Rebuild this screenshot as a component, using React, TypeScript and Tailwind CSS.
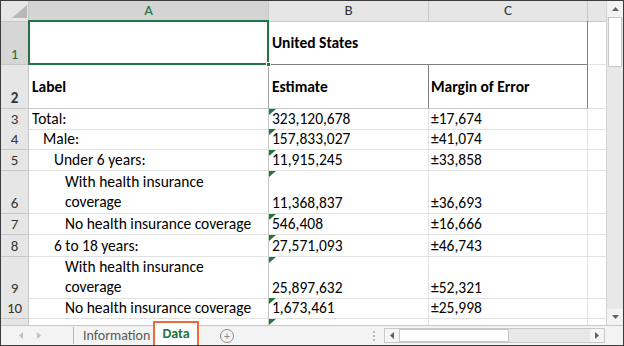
import React from 'react';

const FONT = "font-['Carlito','Lato',sans-serif]";

type Row = {
  n: number;
  h: string;
  label: string;
  indent: number;
  est: string;
  moe: string;
  wrap?: boolean;
};

const ROWS: Row[] = [
  { n: 3, h: 'h-[20px]', label: 'Total:', indent: 0, est: '323,120,678', moe: '±17,674' },
  { n: 4, h: 'h-[21px]', label: 'Male:', indent: 1, est: '157,833,027', moe: '±41,074' },
  { n: 5, h: 'h-[21px]', label: 'Under 6 years:', indent: 2, est: '11,915,245', moe: '±33,858' },
  { n: 6, h: 'h-[43px]', label: 'With health insurance coverage', indent: 3, est: '11,368,837', moe: '±36,693', wrap: true },
  { n: 7, h: 'h-[21px]', label: 'No health insurance coverage', indent: 3, est: '546,408', moe: '±16,666' },
  { n: 8, h: 'h-[22px]', label: '6 to 18 years:', indent: 2, est: '27,571,093', moe: '±46,743' },
  { n: 9, h: 'h-[41px]', label: 'With health insurance coverage', indent: 3, est: '25,897,632', moe: '±52,321', wrap: true },
  { n: 10, h: 'h-[21px]', label: 'No health insurance coverage', indent: 3, est: '1,673,461', moe: '±25,998' },
];

const INDENT = ['pl-[3px]', 'pl-[14px]', 'pl-[25px]', 'pl-[36px]'];

const COLS = 'grid grid-cols-[28px_240px_160px_159px_18px]';

function ErrorFlag() {
  return (
    <svg className="absolute left-0 top-0" width="7" height="6" viewBox="0 0 7 6">
      <polygon points="0,0 7,0 0,6" fill="#1f7a3a" />
    </svg>
  );
}

function RowHead({ n, selected }: { n: number | string; selected?: boolean }) {
  return (
    <div
      className={`flex items-end justify-center border-r border-b border-[#c8c8c8] pb-[1px] text-[15px] leading-[18px] ${
        selected ? 'bg-[#d6d6d6] text-[#217346]' : 'bg-[#e6e6e6] text-[#333]'
      }`}
    >
      {n}
    </div>
  );
}

function DataRow({ row }: { row: Row }) {
  return (
    <div className={`${COLS} ${row.h}`}>
      <RowHead n={row.n} />
      <div
        className={`flex items-end border-r border-b border-r-[#c6c6c6] border-b-[#e1e1e1] pr-1 pb-[1px] ${INDENT[row.indent]}`}
      >
        {row.wrap ? (
          <div className="leading-[20px]">
            With health insurance
            <br />
            coverage
          </div>
        ) : (
          <div className="whitespace-nowrap leading-[19px]">{row.label}</div>
        )}
      </div>
      <div className="relative flex items-end border-r border-b border-[#e1e1e1] pl-[3px] pb-[1px]">
        <ErrorFlag />
        <div className="leading-[19px]">{row.est}</div>
      </div>
      <div className="flex items-end border-r border-b border-[#e1e1e1] pl-[2px] pb-[1px]">
        <div className="leading-[19px]">{row.moe}</div>
      </div>
      <div className="border-b border-[#e1e1e1]" />
    </div>
  );
}

function VScroll() {
  return (
    <div className="flex w-[17px] flex-col border-l border-[#d4d4d4] bg-[#e8e8e8]">
      <div className="flex h-[16px] items-center justify-center bg-[#f3f3f3]">
        <svg width="7" height="4" viewBox="0 0 7 4">
          <polygon points="0,4 7,4 3.5,0" fill="#606060" />
        </svg>
      </div>
      <div className="mx-[1px] h-[50px] border border-[#c8c8c8] bg-white" />
      <div className="flex-1" />
      <div className="flex h-[16px] items-center justify-center bg-[#f3f3f3]">
        <svg width="7" height="4" viewBox="0 0 7 4">
          <polygon points="0,0 7,0 3.5,4" fill="#606060" />
        </svg>
      </div>
    </div>
  );
}

function TabBar() {
  return (
    <div className="relative flex h-[20px] items-center border-t border-[#c8c8c8] bg-[#f3f3f3] text-[14px]">
      <div className="flex w-[72px] items-center gap-[14px] pl-[18px]">
        <svg width="4" height="7" viewBox="0 0 4 7">
          <polygon points="4,0 4,7 0,3.5" fill="#c0c0c0" />
        </svg>
        <svg width="4" height="7" viewBox="0 0 4 7">
          <polygon points="0,0 0,7 4,3.5" fill="#c0c0c0" />
        </svg>
      </div>
      <div className="h-[17px] w-px bg-[#b8b8b8]" />
      <div className="w-[79px] pl-[9px] text-[#595959]">Information</div>
      <div className="relative -mb-[2px] flex h-[26px] w-[46px] items-center justify-center self-end border-2 border-[#ef6a3a] bg-white pb-[1px] font-bold text-[#217346]">
        Data
      </div>
      <div className="ml-[21px] flex h-[14px] w-[14px] items-center justify-center rounded-full border border-[#8a8a8a] text-[12px] leading-none text-[#8a8a8a]">
        +
      </div>
      <div className="ml-[139px] flex flex-col gap-[2px]">
        <div className="h-[2px] w-[2px] bg-[#b8b8b8]" />
        <div className="h-[2px] w-[2px] bg-[#b8b8b8]" />
        <div className="h-[2px] w-[2px] bg-[#b8b8b8]" />
      </div>
      <div className="ml-[9px] flex h-[15px] w-[221px] border border-[#c8c8c8] bg-[#e8e8e8]">
        <div className="flex w-[14px] items-center justify-center bg-[#f5f5f5]">
          <svg width="4" height="7" viewBox="0 0 4 7">
            <polygon points="4,0 4,7 0,3.5" fill="#606060" />
          </svg>
        </div>
        <div className="w-[110px] border border-[#c8c8c8] bg-white" />
        <div className="flex-1" />
        <div className="flex w-[14px] items-center justify-center bg-[#f5f5f5]">
          <svg width="4" height="7" viewBox="0 0 4 7">
            <polygon points="0,0 0,7 4,3.5" fill="#606060" />
          </svg>
        </div>
      </div>
    </div>
  );
}

export default function App() {
  return (
    <div className={`h-[346px] w-[624px] overflow-hidden border border-[#3c3c3c] bg-white text-[15.5px] text-black ${FONT}`}>
      <div className="flex h-[324px]">
        <div className="flex-1 overflow-hidden">
          {/* Column headers */}
          <div className={`${COLS} h-[20px] bg-[#e6e6e6] text-[15px] leading-[19px] text-[#333]`}>
            <div className="relative border-r border-b border-[#c8c8c8]">
              <svg className="absolute left-[11px] top-[4px]" width="15" height="13" viewBox="0 0 15 13">
                <polygon points="15,0 15,13 0,13" fill="#b8b8b8" />
              </svg>
            </div>
            <div className="border-r border-b-2 border-r-[#c8c8c8] border-b-[#217346] bg-[#d4d4d4] text-center text-[#217346]">A</div>
            <div className="border-r border-b border-[#c8c8c8] text-center">B</div>
            <div className="border-r border-b border-[#c8c8c8] text-center">C</div>
            <div className="border-b border-[#c8c8c8]" />
          </div>

          {/* Row 1 */}
          <div className={`${COLS} h-[44px]`}>
            <RowHead n={1} selected />
            <div className="relative border-r border-b border-[#e1e1e1]">
              <div className="absolute -left-px -top-px bottom-[-1px] right-[-1px] border-2 border-[#217346]" />
              <div className="absolute bottom-[-3px] right-[-3px] h-[5px] w-[5px] border border-white bg-[#217346]" />
            </div>
            <div className="col-span-2 flex items-center border-r border-b border-[#7f7f7f] pl-[3px] font-bold">
              United States
            </div>
            <div className="border-b border-[#e1e1e1]" />
          </div>

          {/* Row 2 */}
          <div className={`${COLS} h-[44px] font-bold`}>
            <RowHead n={2} />
            <div className="flex items-center border-r border-b border-r-[#a6a6a6] border-b-[#c6c6c6] pl-[3px]">Label</div>
            <div className="flex items-center border-r border-b border-r-[#7f7f7f] border-b-[#c6c6c6] pl-[3px]">Estimate</div>
            <div className="flex items-center border-r border-b border-r-[#7f7f7f] border-b-[#c6c6c6] pl-[2px]">Margin of Error</div>
            <div className="border-b border-[#e1e1e1]" />
          </div>

          {ROWS.map((row) => (
            <DataRow key={row.n} row={row} />
          ))}

          {/* Row 11 (cut off) */}
          <div className={`${COLS} h-[6px]`}>
            <div className="border-r border-[#c8c8c8] bg-[#e6e6e6]" />
            <div className="border-r border-[#c6c6c6]" />
            <div className="relative border-r border-[#e1e1e1]">
              <ErrorFlag />
            </div>
            <div className="border-r border-[#e1e1e1]" />
            <div />
          </div>
        </div>
        <VScroll />
      </div>
      <TabBar />
    </div>
  );
}
